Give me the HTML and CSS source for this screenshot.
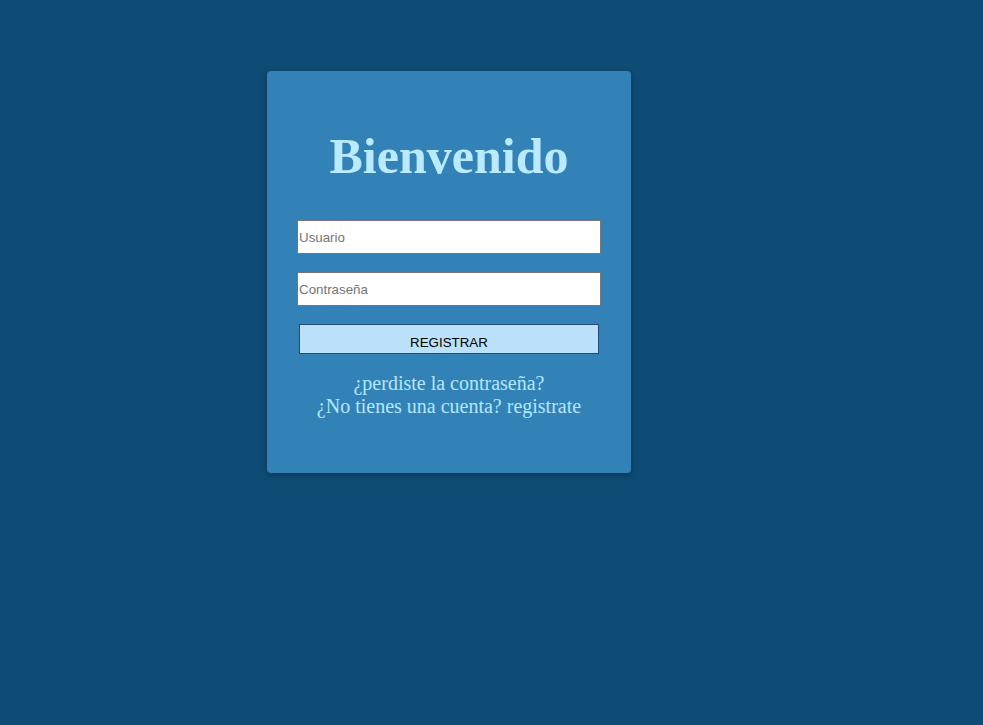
FILE: index.html
```html
<!DOCTYPE html>
<html lang="es">
<head>
<meta charset="utf-8">
<title>Bienvenido</title>
<link rel="stylesheet" href="styles.css">
</head>
<body>
<main class="page">
  <form class="card">
    <h1 class="title">Bienvenido</h1>
    <input class="field" type="text" placeholder="Usuario">
    <input class="field" type="password" placeholder="Contraseña">
    <button class="btn" type="button">REGISTRAR</button>
    <div class="links">
      <a class="link" href="#">¿perdiste la contraseña?</a>
      <a class="link" href="#">¿No tienes una cuenta? registrate</a>
    </div>
  </form>
</main>
</body>
</html>
```
FILE: styles.css
```css
html, body {
  margin: 0;
  padding: 0;
  height: 100%;
}
body {
  background: #0f4c75;
  font-family: "Liberation Serif", "Times New Roman", serif;
}
.page {
  padding: 71px 0 0 267px;
}
.card {
  box-sizing: border-box;
  width: 364px;
  height: 402px;
  background: #3282b8;
  border-radius: 4px;
  box-shadow: 0 2px 6px rgba(0, 0, 0, 0.3);
  padding: 57px 30px 0;
  display: flex;
  flex-direction: column;
  align-items: center;
}
.title {
  margin: 0 0 35px;
  font-size: 50px;
  line-height: 57px;
  font-weight: bold;
  color: #b9eafd;
  text-align: center;
}
.field {
  box-sizing: border-box;
  width: 304px;
  height: 34px;
  margin: 0 0 18px;
  padding: 1px 1px;
  border: 1px solid #767676;
  background: #fff;
  font-family: "Liberation Sans", Arial, sans-serif;
  font-size: 13.333px;
  color: #000;
  outline: none;
}
.field::placeholder {
  color: #757575;
}
.btn {
  box-sizing: border-box;
  width: 300px;
  height: 30px;
  margin: 0 0 18px;
  padding: 7px 0 0;
  border: 1px solid #27497e;
  background: #bbe1fa;
  color: #000;
  font-family: "Liberation Sans", Arial, sans-serif;
  font-size: 13.333px;
}
.links {
  display: flex;
  flex-direction: column;
  align-items: center;
}
.link {
  color: #b4e8fb;
  text-decoration: none;
  font-size: 20px;
  line-height: 23px;
}
```
